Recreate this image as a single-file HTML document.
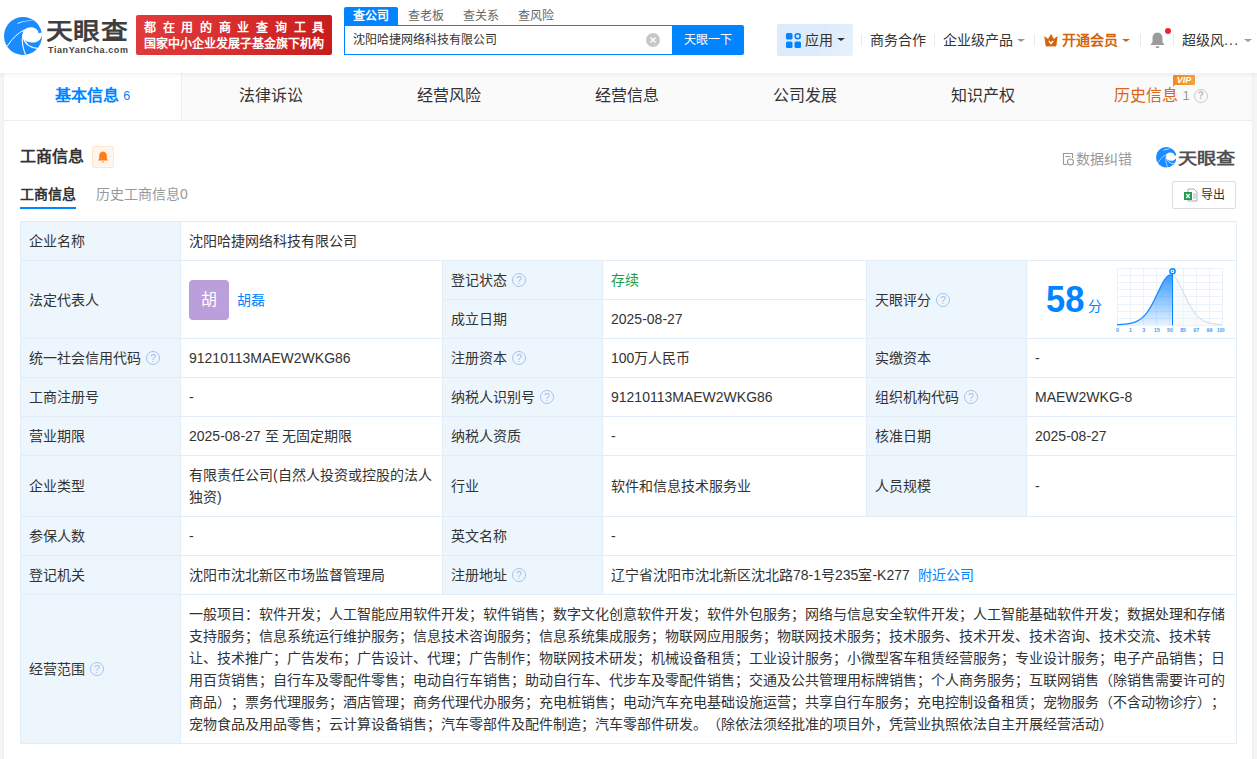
<!DOCTYPE html>
<html lang="zh-CN"><head>
<meta charset="utf-8">
<title>天眼查</title>
<style>
*{box-sizing:border-box;margin:0;padding:0}
html,body{width:1257px;height:759px;overflow:hidden}
body{text-spacing-trim:space-all;font-family:"Liberation Sans",sans-serif;font-size:14px;color:#333;background:#f5f5f5;position:relative}
a{text-decoration:none;color:#0084ff}
.abs{position:absolute}
/* header */
#hd{position:absolute;left:0;top:0;width:1257px;height:73px;background:#fff;box-shadow:0 1px 5px rgba(0,0,0,.07);z-index:5}
#logo-ic{position:absolute;left:4px;top:16.8px;width:38px;height:38px}
#logo-tx{position:absolute;left:45.5px;top:17px;font-size:22.5px;font-weight:bold;color:#3f3f3f;line-height:30px;white-space:nowrap;transform:scaleX(1.19);transform-origin:0 0}
#logo-sub{position:absolute;left:48px;top:45px;font-size:9px;font-weight:bold;color:#444;line-height:11px;letter-spacing:0.58px;white-space:nowrap}
#badge{position:absolute;left:136px;top:15px;width:196px;height:40px;border-radius:2px;background:linear-gradient(100deg,#e23b3b 0%,#d42a2a 60%,#c81c1c 100%);color:#fff;font-weight:bold;font-size:12px;line-height:16px;padding:5px 0 0 8px;white-space:nowrap}
#badge .l1{letter-spacing:6.7px}
.stab{position:absolute;top:7px;height:18px;line-height:19px;font-size:12px;color:#666;white-space:nowrap}
#stab1{left:344px;width:54px;background:#0084ff;color:#fff;text-align:center;border-radius:2px 2px 0 0;font-weight:bold}
#sinput{position:absolute;left:344px;top:25px;width:329px;height:30px;border:1px solid #0084ff;border-right:none;background:#fff;font-size:12px;line-height:28px;padding-left:8px;color:#333;white-space:nowrap}
#sclear{position:absolute;left:646px;top:33px;width:14px;height:14px}
#sbtn{position:absolute;left:672px;top:25px;width:72px;height:30px;background:#0084ff;color:#fff;font-size:12px;line-height:30px;text-align:center;border-radius:0 2px 2px 0}
.nav{position:absolute;top:24px;height:32px;line-height:32px;font-size:14px;color:#333;white-space:nowrap}
.sep{position:absolute;top:34px;width:1px;height:12px;background:#e6eaef}
.caret{display:inline-block;width:0;height:0;border-left:4px solid transparent;border-right:4px solid transparent;border-top:3.6px solid #999;vertical-align:middle;margin-left:4px;position:relative;top:-1px}
/* container */
#wrap{position:absolute;left:4px;top:73px;width:1248px;height:700px;background:#fff;box-shadow:-1px 0 0 #efefef,1px 0 0 #efefef}
#tabs{position:absolute;left:0;top:0;width:1248px;height:48px;background:#fafafa;border-bottom:1px solid #ececec}
.tab{position:absolute;top:0;height:47px;line-height:45px;font-size:16px;color:#333;text-align:center;white-space:nowrap}
.tab.on{background:#fff;color:#0084ff;font-weight:bold;border-right:1px solid #eee;height:47px}
.tab .n{font-size:12.5px;font-weight:normal;position:relative;top:-1px}
/* section */
#stitle{position:absolute;left:20px;top:146px;font-size:16px;font-weight:bold;color:#333;line-height:22px}
#sbell{position:absolute;left:92px;top:146px;width:22px;height:22px;background:#fff5ec;border:1px solid #ffe6cf;border-radius:2px}
.sub{position:absolute;top:184px;font-size:14px;line-height:20px;white-space:nowrap}
#tbl{position:absolute;left:20px;top:221px;width:1216px;border-collapse:collapse;table-layout:fixed;font-size:14px;color:#333}
#tbl td{border:1px solid #e2edf8;padding:0 8px;line-height:22px;vertical-align:middle;height:39px;background:#fff}
#tbl td.l{background:#eef6fd}
.w{display:inline-block;white-space:nowrap;vertical-align:baseline}
.j{text-align:justify;text-align-last:justify}
.q{display:inline-block;width:14px;height:14px;border:1.4px solid #a0c5ec;border-radius:50%;color:#9cc3ec;font-size:10.5px;line-height:12.6px;text-align:center;vertical-align:middle;margin-left:5px;position:relative;top:-1px}
</style>
</head>
<body>
<div id="hd">
<svg id="logo-ic" viewBox="0 0 38 38"><circle cx="19" cy="19" r="19" fill="#1a8cff"></circle>
<path d="M20 13 C22.5 10.9 25 10.2 27 10.3 C30 10.4 32.5 11.8 33.8 13.8 C34.3 14.6 34.5 15.4 34.3 16.3 L39 15.2 L38.2 17.8 C37.8 19.5 37 21.2 36 22.4 C35 23.6 33.8 24.4 32.3 24.9 C30.8 25.5 29.2 25.7 27.5 25.5 C25.6 25.3 23.8 24.9 22.4 24.3 C21.2 23.6 20.3 22.9 19.8 22 C19.1 20.7 18.8 19.3 18.9 17.9 C19 16.1 19.4 14.5 20 13 Z" fill="#fff"></path>
<path d="M20.4 12.9 Q10.8 17.3 3 29.4" fill="none" stroke="#fff" stroke-width="1"></path>
<path d="M20.3 12.9 C17.6 19 17.2 27 21.7 38.2" fill="none" stroke="#fff" stroke-width="1.05"></path>
<path d="M19.3 20 C20.5 26.6 26 30.6 33.8 31.4" fill="none" stroke="#fff" stroke-width="1.3"></path>
<path d="M13.5 7 C18 4.7 24 3.6 30 3.7 C24 2.9 18 3.6 13.7 6 Z" fill="#fff"></path></svg>
<div id="logo-tx"><span class="w j" style="width: 69px;">天眼查</span></div>
<div id="logo-sub">TianYanCha.com</div>
<div id="badge"><div class="l1"><span class="w j" style="width: 187px;">都在用的商业查询工具</span></div><div><span class="w j" style="width: 180px;">国家中小企业发展子基金旗下机构</span></div></div>
<div class="stab" id="stab1"><span class="w j" style="width: 36px;">查公司</span></div>
<div class="stab" style="left:408px"><span class="w j" style="width: 36px;">查老板</span></div>
<div class="stab" style="left:463px"><span class="w j" style="width: 36px;">查关系</span></div>
<div class="stab" style="left:518px"><span class="w j" style="width: 36px;">查风险</span></div>
<div id="sinput"><span class="w j" style="width: 144px;">沈阳哈捷网络科技有限公司</span></div>
<svg id="sclear" viewBox="0 0 14 14"><circle cx="7" cy="7" r="7" fill="#c8c8c8"></circle><path d="M4.5 4.5 L9.5 9.5 M9.5 4.5 L4.5 9.5" stroke="#fff" stroke-width="1.3"></path></svg>
<div id="sbtn"><span class="w j" style="width: 48px;">天眼一下</span></div>
<div class="nav" style="left:777px;width:76px;background:linear-gradient(120deg,#dcebfc 0%,#dcebfc 55%,#e9f2fc 100%);border-radius:2px"><svg style="position:absolute;left:9px;top:9px" width="15" height="15" viewBox="0 0 15 15"><rect x="0" y="0" width="6.5" height="6.5" rx="1.5" fill="#0084ff"></rect><rect x="0" y="8.5" width="6.5" height="6.5" rx="1.5" fill="#0084ff"></rect><rect x="8.5" y="8.5" width="6.5" height="6.5" rx="1.5" fill="#0084ff"></rect><circle cx="11.7" cy="3.3" r="2.5" fill="none" stroke="#0084ff" stroke-width="1.6"></circle></svg><span style="position:absolute;left:28px"><span class="w j" style="width: 28px;">应用</span></span><i class="caret" style="position:absolute;left:56px;top:14px;border-top-color:#333"></i></div>
<div class="sep" style="left:861px"></div>
<div class="nav" style="left:870px"><span class="w j" style="width: 56px;">商务合作</span></div>
<div class="sep" style="left:934px"></div>
<div class="nav" style="left:943px"><span class="w j" style="width:70px">企业级产品</span><i class="caret"></i></div>
<div class="sep" style="left:1034px"></div>
<div class="nav" style="left:1044px;color:#d2640f;font-weight:bold"><svg style="vertical-align:middle;position:relative;top:-1px;margin-right:4px" width="14" height="13" viewBox="0 0 14 13"><path d="M.8 2.8 L4.2 5.4 L7 .6 L9.8 5.4 L13.2 2.8 L11.9 12 L2.1 12 Z" fill="#d2640f" stroke="#d2640f" stroke-width=".8" stroke-linejoin="round"></path><path d="M4.9 6.9 L7 9.6 L9.1 6.9" fill="none" stroke="#fff" stroke-width="1.5"></path></svg><span class="w j" style="width:56px">开通会员</span><i class="caret" style="border-top-color:#d2640f"></i></div>
<div class="sep" style="left:1140px"></div>
<svg class="abs" style="left:1149px;top:31px" width="17" height="18" viewBox="0 0 17 18"><path d="M8.5 1.5 C5 1.5 3.5 4.5 3.5 7.5 L3.5 11 L1.5 14 L15.5 14 L13.5 11 L13.5 7.5 C13.5 4.5 12 1.5 8.5 1.5 Z" fill="#9b9b9b"></path><path d="M6.5 15.3 A2 2 0 0 0 10.5 15.3 Z" fill="#9b9b9b"></path></svg>
<div class="abs" style="left:1165px;top:28px;width:6px;height:6px;border-radius:50%;background:#f5222d"></div>
<div class="sep" style="left:1173px"></div>
<div class="nav" style="left:1182px"><span class="w j" style="width:42px">超级风</span><span style="letter-spacing:1.2px">...</span><i class="caret" style="margin-left:5px"></i></div>
</div>
<div id="wrap">
<div id="tabs">
<div class="tab on" style="left:0;width:178px"><span class="w j" style="width:64px">基本信息</span> <span class="n">6</span></div>
<div class="tab" style="left:178px;width:178px"><span class="w j" style="width: 64px;">法律诉讼</span></div>
<div class="tab" style="left:356px;width:178px"><span class="w j" style="width: 64px;">经营风险</span></div>
<div class="tab" style="left:534px;width:178px"><span class="w j" style="width: 64px;">经营信息</span></div>
<div class="tab" style="left:712px;width:178px"><span class="w j" style="width: 64px;">公司发展</span></div>
<div class="tab" style="left:890px;width:178px"><span class="w j" style="width: 64px;">知识产权</span></div>
<div class="tab" style="left:1068px;width:178px;color:#d9641b"><span class="w j" style="width:64px">历史信息</span> <span class="n" style="color:#999;font-size:13px">1</span><span class="q" style="border-color:#c3cad1;color:#b9bfc6;margin-left:4px;font-weight:bold;font-size:10px">?</span></div>
<div class="abs" style="left:1169px;top:2px;width:22px;height:10px;background:linear-gradient(90deg,#f08a1e,#f7a23a);color:#fff;font-size:9px;font-weight:bold;font-style:italic;line-height:10px;text-align:center;border-radius:1px">VIP<i style="position:absolute;left:0;top:10px;width:0;height:0;border-top:2.5px solid #ef8a1f;border-right:2.5px solid transparent"></i></div>
</div>
</div>
<div id="stitle"><span class="w j" style="width: 64px;">工商信息</span></div>
<div id="sbell"><svg width="20" height="20" viewBox="0 0 20 20"><path d="M10 4.5 C7.3 4.5 6.2 6.8 6.2 9 L6.2 11.5 L5 13.5 L15 13.5 L13.8 11.5 L13.8 9 C13.8 6.8 12.7 4.5 10 4.5 Z" fill="#ff7d18"></path><path d="M8.6 14.5 A1.5 1.5 0 0 0 11.4 14.5 Z" fill="#ff7d18"></path></svg></div>
<div class="sub" style="left:20px;color:#333;font-weight:bold;"><span class="w j" style="width: 56px;">工商信息</span></div>
<div class="abs" style="left:20px;top:207px;width:56px;height:2px;background:#0084ff"></div>
<div class="sub" style="left:96px;color:#999"><span class="w j" style="width: 91.8px;">历史工商信息0</span></div>
<div class="abs" style="left:1062px;top:149px;font-size:14px;color:#999;line-height:20px;white-space:nowrap"><svg style="vertical-align:middle;position:relative;top:-1px" width="13" height="14" viewBox="0 0 13 14"><path d="M1.5 12.5 L1.5 1.5 L10.5 1.5 L10.5 6" fill="none" stroke="#999" stroke-width="1.1"></path><path d="M3.5 4.5 L8.5 4.5" stroke="#999" stroke-width="1.1"></path><circle cx="8.5" cy="10" r="3" fill="none" stroke="#999" stroke-width="1.1"></circle><path d="M1.5 12.5 L5 12.5" stroke="#999" stroke-width="1.1"></path></svg><span style="margin-left:1px"><span class="w j" style="width: 56px;">数据纠错</span></span></div>
<svg class="abs" style="left:1155.5px;top:147px" width="20.5" height="20.5" viewBox="0 0 38 38"><circle cx="19" cy="19" r="19" fill="#1a8cff"></circle>
<path d="M20 13 C22.5 10.9 25 10.2 27 10.3 C30 10.4 32.5 11.8 33.8 13.8 C34.3 14.6 34.5 15.4 34.3 16.3 L39 15.2 L38.2 17.8 C37.8 19.5 37 21.2 36 22.4 C35 23.6 33.8 24.4 32.3 24.9 C30.8 25.5 29.2 25.7 27.5 25.5 C25.6 25.3 23.8 24.9 22.4 24.3 C21.2 23.6 20.3 22.9 19.8 22 C19.1 20.7 18.8 19.3 18.9 17.9 C19 16.1 19.4 14.5 20 13 Z" fill="#fff"></path>
<path d="M20.4 12.9 Q10.8 17.3 3 29.4" fill="none" stroke="#fff" stroke-width="1"></path>
<path d="M20.3 12.9 C17.6 19 17.2 27 21.7 38.2" fill="none" stroke="#fff" stroke-width="1.05"></path>
<path d="M19.3 20 C20.5 26.6 26 30.6 33.8 31.4" fill="none" stroke="#fff" stroke-width="1.3"></path>
<path d="M13.5 7 C18 4.7 24 3.6 30 3.7 C24 2.9 18 3.6 13.7 6 Z" fill="#fff"></path></svg>
<div class="abs" style="left:1178px;top:147.5px;font-size:16px;font-weight:bold;color:#505052;line-height:22px;white-space:nowrap;transform:scaleX(1.2);transform-origin:0 0"><span class="w j" style="width: 48px;">天眼查</span></div>
<div class="abs" style="left:1172px;top:181px;width:64px;height:28px;border:1px solid #ddd;border-radius:2px;background:#fff;font-size:12px;line-height:26px;color:#333;white-space:nowrap"><svg class="abs" style="left:11px;top:6px" width="14" height="14" viewBox="0 0 14 14"><path d="M4 1 L10 1 L13 4 L13 13 L4 13 Z" fill="#fff" stroke="#999" stroke-width=".8"></path><path d="M9 6h3M9 8h3M9 10h3" stroke="#999" stroke-width=".7"></path><rect x="0" y="4" width="8" height="8" fill="#1d9f4f"></rect><path d="M2.2 6 L5.8 10 M5.8 6 L2.2 10" stroke="#fff" stroke-width="1.2"></path></svg><span class="abs" style="left:28px"><span class="w j" style="width: 24px;">导出</span></span></div>
<table id="tbl"><colgroup><col style="width:160px"><col style="width:262px"><col style="width:160px"><col style="width:264px"><col style="width:160px"><col style="width:210px"></colgroup>
<tbody><tr><td class="l"><span class="w j" style="width: 56px;">企业名称</span></td><td colspan="5"><span class="w j" style="width: 168px;">沈阳哈捷网络科技有限公司</span></td></tr>
<tr><td class="l" rowspan="2"><span class="w j" style="width: 70px;">法定代表人</span></td><td rowspan="2" style="height:78px"><span style="display:inline-block;width:40px;height:40px;border-radius:4px;background:#bb9fdb;color:#fff;font-size:16px;line-height:40px;text-align:center;vertical-align:middle"><span class="w j" style="width: 16px;">胡</span></span><a style="margin-left:8px;vertical-align:middle"><span class="w j" style="width: 28px;">胡磊</span></a></td><td class="l"><span class="w j" style="width:56px">登记状态</span><span class="q">?</span></td><td style="color:#1e9e4a"><span class="w j" style="width: 28px;">存续</span></td><td class="l" rowspan="2"><span class="w j" style="width:56px">天眼评分</span><span class="q">?</span></td><td rowspan="2" id="score"></td></tr>
<tr><td class="l"><span class="w j" style="width: 56px;">成立日期</span></td><td>2025-08-27</td></tr>
<tr><td class="l"><span class="w j" style="width:112px">统一社会信用代码</span><span class="q">?</span></td><td>91210113MAEW2WKG86</td><td class="l"><span class="w j" style="width:56px">注册资本</span><span class="q">?</span></td><td><span class="w j" style="width: 79.36px;">100万人民币</span></td><td class="l"><span class="w j" style="width: 56px;">实缴资本</span></td><td>-</td></tr>
<tr><td class="l"><span class="w j" style="width: 70px;">工商注册号</span></td><td>-</td><td class="l"><span class="w j" style="width:84px">纳税人识别号</span><span class="q">?</span></td><td>91210113MAEW2WKG86</td><td class="l"><span class="w j" style="width:84px">组织机构代码</span><span class="q">?</span></td><td>MAEW2WKG-8</td></tr>
<tr><td class="l"><span class="w j" style="width: 56px;">营业期限</span></td><td><span class="w j" style="width: 163.41px;">2025-08-27 至 无固定期限</span></td><td class="l"><span class="w j" style="width: 70px;">纳税人资质</span></td><td>-</td><td class="l"><span class="w j" style="width: 56px;">核准日期</span></td><td>2025-08-27</td></tr>
<tr><td class="l"><span class="w j" style="width: 56px;">企业类型</span></td><td style="height:61px;padding-right:4px"><span class="w j" style="width: 242.67px;">有限责任公司(自然人投资或控股的法人</span><br><span class="w j" style="width: 32.67px;">独资)</span></td><td class="l"><span class="w j" style="width: 28px;">行业</span></td><td><span class="w j" style="width: 140px;">软件和信息技术服务业</span></td><td class="l"><span class="w j" style="width: 56px;">人员规模</span></td><td>-</td></tr>
<tr><td class="l"><span class="w j" style="width: 56px;">参保人数</span></td><td>-</td><td class="l"><span class="w j" style="width: 56px;">英文名称</span></td><td colspan="3">-</td></tr>
<tr><td class="l"><span class="w j" style="width: 56px;">登记机关</span></td><td><span class="w j" style="width: 196px;">沈阳市沈北新区市场监督管理局</span></td><td class="l"><span class="w j" style="width:56px">注册地址</span><span class="q">?</span></td><td colspan="3"><span class="w j" style="width:298.75px">辽宁省沈阳市沈北新区沈北路78-1号235室-K277</span><a style="margin-left:8px"><span class="w j" style="width: 56px;">附近公司</span></a></td></tr>
<tr><td class="l"><span class="w j" style="width:56px">经营范围</span><span class="q">?</span></td><td colspan="5" style="height:149px;white-space:nowrap;padding-right:0;overflow:hidden"><span class="w j" style="width: 1036px;">一般项目：软件开发；人工智能应用软件开发；软件销售；数字文化创意软件开发；软件外包服务；网络与信息安全软件开发；人工智能基础软件开发；数据处理和存储</span><br><span class="w j" style="width: 1022px;">支持服务；信息系统运行维护服务；信息技术咨询服务；信息系统集成服务；物联网应用服务；物联网技术服务；技术服务、技术开发、技术咨询、技术交流、技术转</span><br><span class="w j" style="width: 1036px;">让、技术推广；广告发布；广告设计、代理；广告制作；物联网技术研发；机械设备租赁；工业设计服务；小微型客车租赁经营服务；专业设计服务；电子产品销售；日</span><br><span class="w j" style="width: 1036px;">用百货销售；自行车及零配件零售；电动自行车销售；助动自行车、代步车及零配件销售；交通及公共管理用标牌销售；个人商务服务；互联网销售（除销售需要许可的</span><br><span class="w j" style="width: 1036px;">商品）；票务代理服务；酒店管理；商务代理代办服务；充电桩销售；电动汽车充电基础设施运营；共享自行车服务；充电控制设备租赁；宠物服务（不含动物诊疗）；</span><br><span class="w j" style="width: 924px;">宠物食品及用品零售；云计算设备销售；汽车零部件及配件制造；汽车零部件研发。（除依法须经批准的项目外，凭营业执照依法自主开展经营活动）</span></td></tr>
</tbody></table>
<div class="abs" style="left:1046.1px;top:278px;font-size:37.3px;font-weight:bold;color:#0084ff;line-height:42px;white-space:nowrap;transform:scaleX(.924);transform-origin:0 0">58</div>
<div class="abs" style="left:1087.5px;top:295.5px;font-size:14px;color:#0084ff;line-height:20px"><span class="w j" style="width: 14px;">分</span></div>
<svg class="abs" style="left:1112px;top:263px;overflow:visible" width="120" height="72" viewBox="-5 -5 120 72">
<defs><linearGradient id="gl" x1="0" y1="0" x2="0" y2="1"><stop offset="0" stop-color="#2f95ff" stop-opacity=".95"></stop><stop offset="1" stop-color="#2f95ff" stop-opacity=".12"></stop></linearGradient></defs>
<g stroke="#e9f1fa" stroke-width="1" fill="none"><path d="M0.5 0V57.5"></path><path d="M13.5 0V57.5"></path><path d="M26.5 0V57.5"></path><path d="M39.5 0V57.5"></path><path d="M52.5 0V57.5"></path><path d="M66.5 0V57.5"></path><path d="M79.5 0V57.5"></path><path d="M92.5 0V57.5"></path><path d="M105.5 0V57.5"></path><path d="M0 0.5H105.5"></path><path d="M0 7.5H105.5"></path><path d="M0 14.5H105.5"></path><path d="M0 21.5H105.5"></path><path d="M0 28.5H105.5"></path><path d="M0 36.5H105.5"></path><path d="M0 43.5H105.5"></path><path d="M0 50.5H105.5"></path><path d="M0 57.5H105.5"></path></g>
<path d="M55.5 7.44 L56.0 7.72 L56.5 8.06 L57.0 8.47 L57.5 8.93 L58.0 9.46 L58.5 10.04 L59.0 10.68 L59.5 11.37 L60.0 12.11 L60.5 12.89 L61.0 13.72 L61.5 14.58 L62.0 15.48 L62.5 16.41 L63.0 17.37 L63.5 18.35 L64.0 19.36 L64.5 20.38 L65.0 21.41 L65.5 22.46 L66.0 23.51 L66.5 24.57 L67.0 25.63 L67.5 26.69 L68.0 27.75 L68.5 28.80 L69.0 29.84 L69.5 30.87 L70.0 31.88 L70.5 32.88 L71.0 33.87 L71.5 34.83 L72.0 35.78 L72.5 36.70 L73.0 37.60 L73.5 38.48 L74.0 39.34 L74.5 40.17 L75.0 40.97 L75.5 41.75 L76.0 42.50 L76.5 43.23 L77.0 43.93 L77.5 44.61 L78.0 45.25 L78.5 45.88 L79.0 46.47 L79.5 47.04 L80.0 47.59 L80.5 48.11 L81.0 48.61 L81.5 49.09 L82.0 49.54 L82.5 49.97 L83.0 50.38 L83.5 50.76 L84.0 51.13 L84.5 51.48 L85.0 51.81 L85.5 52.12 L86.0 52.41 L86.5 52.69 L87.0 52.96 L87.5 53.20 L88.0 53.43 L88.5 53.65 L89.0 53.86 L89.5 54.05 L90.0 54.24 L90.5 54.41 L91.0 54.57 L91.5 54.72 L92.0 54.86 L92.5 54.99 L93.0 55.12 L93.5 55.23 L94.0 55.34 L94.5 55.44 L95.0 55.54 L95.5 55.63 L96.0 55.71 L96.5 55.79 L97.0 55.86 L97.5 55.93 L98.0 55.99 L98.5 56.05 L99.0 56.11 L99.5 56.16 L100.0 56.21 L100.5 56.26 L101.0 56.30 L101.5 56.34 L102.0 56.38 L102.5 56.42 L103.0 56.45 L103.5 56.48 L104.0 56.51 L104.5 56.54 L105.0 56.56 L105 57 L55.5 57 Z" fill="#f3f5f7" fill-opacity=".5"></path>
<path d="M55.5 7.44 L56.0 7.72 L56.5 8.06 L57.0 8.47 L57.5 8.93 L58.0 9.46 L58.5 10.04 L59.0 10.68 L59.5 11.37 L60.0 12.11 L60.5 12.89 L61.0 13.72 L61.5 14.58 L62.0 15.48 L62.5 16.41 L63.0 17.37 L63.5 18.35 L64.0 19.36 L64.5 20.38 L65.0 21.41 L65.5 22.46 L66.0 23.51 L66.5 24.57 L67.0 25.63 L67.5 26.69 L68.0 27.75 L68.5 28.80 L69.0 29.84 L69.5 30.87 L70.0 31.88 L70.5 32.88 L71.0 33.87 L71.5 34.83 L72.0 35.78 L72.5 36.70 L73.0 37.60 L73.5 38.48 L74.0 39.34 L74.5 40.17 L75.0 40.97 L75.5 41.75 L76.0 42.50 L76.5 43.23 L77.0 43.93 L77.5 44.61 L78.0 45.25 L78.5 45.88 L79.0 46.47 L79.5 47.04 L80.0 47.59 L80.5 48.11 L81.0 48.61 L81.5 49.09 L82.0 49.54 L82.5 49.97 L83.0 50.38 L83.5 50.76 L84.0 51.13 L84.5 51.48 L85.0 51.81 L85.5 52.12 L86.0 52.41 L86.5 52.69 L87.0 52.96 L87.5 53.20 L88.0 53.43 L88.5 53.65 L89.0 53.86 L89.5 54.05 L90.0 54.24 L90.5 54.41 L91.0 54.57 L91.5 54.72 L92.0 54.86 L92.5 54.99 L93.0 55.12 L93.5 55.23 L94.0 55.34 L94.5 55.44 L95.0 55.54 L95.5 55.63 L96.0 55.71 L96.5 55.79 L97.0 55.86 L97.5 55.93 L98.0 55.99 L98.5 56.05 L99.0 56.11 L99.5 56.16 L100.0 56.21 L100.5 56.26 L101.0 56.30 L101.5 56.34 L102.0 56.38 L102.5 56.42 L103.0 56.45 L103.5 56.48 L104.0 56.51 L104.5 56.54 L105.0 56.56" fill="none" stroke="#c3d4e6" stroke-width="1"></path>
<path d="M0.0 56.67 L0.5 56.65 L1.0 56.63 L1.5 56.61 L2.0 56.58 L2.5 56.56 L3.0 56.53 L3.5 56.50 L4.0 56.48 L4.5 56.44 L5.0 56.41 L5.5 56.37 L6.0 56.34 L6.5 56.29 L7.0 56.25 L7.5 56.20 L8.0 56.15 L8.5 56.10 L9.0 56.04 L9.5 55.98 L10.0 55.92 L10.5 55.85 L11.0 55.77 L11.5 55.69 L12.0 55.61 L12.5 55.52 L13.0 55.42 L13.5 55.32 L14.0 55.21 L14.5 55.09 L15.0 54.97 L15.5 54.83 L16.0 54.69 L16.5 54.54 L17.0 54.37 L17.5 54.20 L18.0 54.02 L18.5 53.82 L19.0 53.61 L19.5 53.39 L20.0 53.15 L20.5 52.90 L21.0 52.64 L21.5 52.36 L22.0 52.06 L22.5 51.74 L23.0 51.41 L23.5 51.06 L24.0 50.69 L24.5 50.30 L25.0 49.88 L25.5 49.45 L26.0 48.99 L26.5 48.51 L27.0 48.01 L27.5 47.48 L28.0 46.93 L28.5 46.36 L29.0 45.75 L29.5 45.13 L30.0 44.47 L30.5 43.79 L31.0 43.09 L31.5 42.36 L32.0 41.60 L32.5 40.81 L33.0 40.00 L33.5 39.17 L34.0 38.31 L34.5 37.43 L35.0 36.52 L35.5 35.59 L36.0 34.64 L36.5 33.67 L37.0 32.68 L37.5 31.68 L38.0 30.66 L38.5 29.63 L39.0 28.59 L39.5 27.54 L40.0 26.48 L40.5 25.42 L41.0 24.36 L41.5 23.30 L42.0 22.25 L42.5 21.21 L43.0 20.17 L43.5 19.15 L44.0 18.15 L44.5 17.18 L45.0 16.22 L45.5 15.30 L46.0 14.41 L46.5 13.55 L47.0 12.73 L47.5 11.96 L48.0 11.23 L48.5 10.55 L49.0 9.92 L49.5 9.35 L50.0 8.84 L50.5 8.38 L51.0 7.99 L51.5 7.66 L52.0 7.39 L52.5 7.20 L53.0 7.07 L53.5 7.01 L54.0 7.01 L54.5 7.09 L55.0 7.23 L55.5 7.44 L55.5 57 L0 57 Z" fill="url(#gl)"></path>
<path d="M0.0 56.67 L0.5 56.65 L1.0 56.63 L1.5 56.61 L2.0 56.58 L2.5 56.56 L3.0 56.53 L3.5 56.50 L4.0 56.48 L4.5 56.44 L5.0 56.41 L5.5 56.37 L6.0 56.34 L6.5 56.29 L7.0 56.25 L7.5 56.20 L8.0 56.15 L8.5 56.10 L9.0 56.04 L9.5 55.98 L10.0 55.92 L10.5 55.85 L11.0 55.77 L11.5 55.69 L12.0 55.61 L12.5 55.52 L13.0 55.42 L13.5 55.32 L14.0 55.21 L14.5 55.09 L15.0 54.97 L15.5 54.83 L16.0 54.69 L16.5 54.54 L17.0 54.37 L17.5 54.20 L18.0 54.02 L18.5 53.82 L19.0 53.61 L19.5 53.39 L20.0 53.15 L20.5 52.90 L21.0 52.64 L21.5 52.36 L22.0 52.06 L22.5 51.74 L23.0 51.41 L23.5 51.06 L24.0 50.69 L24.5 50.30 L25.0 49.88 L25.5 49.45 L26.0 48.99 L26.5 48.51 L27.0 48.01 L27.5 47.48 L28.0 46.93 L28.5 46.36 L29.0 45.75 L29.5 45.13 L30.0 44.47 L30.5 43.79 L31.0 43.09 L31.5 42.36 L32.0 41.60 L32.5 40.81 L33.0 40.00 L33.5 39.17 L34.0 38.31 L34.5 37.43 L35.0 36.52 L35.5 35.59 L36.0 34.64 L36.5 33.67 L37.0 32.68 L37.5 31.68 L38.0 30.66 L38.5 29.63 L39.0 28.59 L39.5 27.54 L40.0 26.48 L40.5 25.42 L41.0 24.36 L41.5 23.30 L42.0 22.25 L42.5 21.21 L43.0 20.17 L43.5 19.15 L44.0 18.15 L44.5 17.18 L45.0 16.22 L45.5 15.30 L46.0 14.41 L46.5 13.55 L47.0 12.73 L47.5 11.96 L48.0 11.23 L48.5 10.55 L49.0 9.92 L49.5 9.35 L50.0 8.84 L50.5 8.38 L51.0 7.99 L51.5 7.66 L52.0 7.39 L52.5 7.20 L53.0 7.07 L53.5 7.01 L54.0 7.01 L54.5 7.09 L55.0 7.23 L55.5 7.44" fill="none" stroke="#1a8cff" stroke-width="1.3"></path>
<path d="M55.5 4V57.5" stroke="#0084ff" stroke-width="1"></path>
<circle cx="55.5" cy="3.3" r="2.6" fill="#fff" stroke="#0084ff" stroke-width="1.4"></circle>
<circle cx="55.5" cy="3.3" r=".8" fill="#0084ff"></circle>
<g font-family="Liberation Sans, sans-serif" font-size="5.3" font-weight="bold" fill="#3d9cff"><text x="0.5" y="63.8" text-anchor="middle">0</text><text x="13.6" y="63.8" text-anchor="middle">1</text><text x="26.8" y="63.8" text-anchor="middle">3</text><text x="39.9" y="63.8" text-anchor="middle">15</text><text x="53.0" y="63.8" text-anchor="middle">50</text><text x="66.1" y="63.8" text-anchor="middle">85</text><text x="79.2" y="63.8" text-anchor="middle">97</text><text x="92.4" y="63.8" text-anchor="middle">99</text><text x="107.6" y="63.8" text-anchor="end" textLength="7.6" lengthAdjust="spacingAndGlyphs">100</text></g>
</svg>


</body></html>
